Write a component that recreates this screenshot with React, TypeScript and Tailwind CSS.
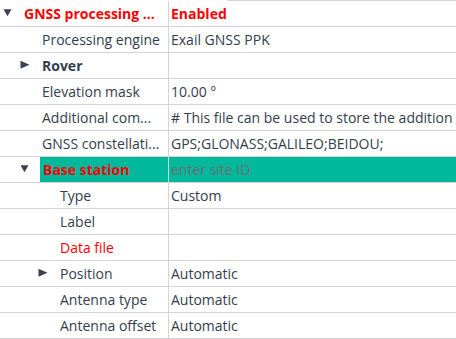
import React from "react";

type Row = {
  label: string;
  value?: string;
  level: number;
  arrow?: "down" | "right";
  labelClass?: string;
  valueClass?: string;
  selected?: boolean;
};

const rows: Row[] = [
  { label: "GNSS processing ...", value: "Enabled", level: 0, arrow: "down", labelClass: "text-[#ff0000] font-bold", valueClass: "text-[#ff0000] font-bold" },
  { label: "Processing engine", value: "Exail GNSS PPK", level: 1 },
  { label: "Rover", level: 1, arrow: "right", labelClass: "font-bold" },
  { label: "Elevation mask", value: "10.00 °", level: 1 },
  { label: "Additional com...", value: "# This file can be used to store the addition", level: 1 },
  { label: "GNSS constellati...", value: "GPS;GLONASS;GALILEO;BEIDOU;", level: 1 },
  { label: "Base station", value: "enter site ID", level: 1, arrow: "down", labelClass: "text-[#ff0000] font-bold", valueClass: "text-[#6a6e70]", selected: true },
  { label: "Type", value: "Custom", level: 2 },
  { label: "Label", value: "", level: 2 },
  { label: "Data file", value: "", level: 2, labelClass: "text-[#ff0000]" },
  { label: "Position", value: "Automatic", level: 2, arrow: "right" },
  { label: "Antenna type", value: "Automatic", level: 2 },
  { label: "Antenna offset", value: "Automatic", level: 2 },
];

function Arrow({ dir }: { dir: "down" | "right" }) {
  if (dir === "down") {
    return (
      <svg width="9" height="8" viewBox="0 0 9 8" className="block">
        <polygon points="0.5,0.5 8.5,0.5 4.5,7.5" fill="#3c4150" />
      </svg>
    );
  }
  return (
    <svg width="10" height="9" viewBox="0 0 10 9" className="block">
      <polygon points="0.5,0.5 9.5,4.5 0.5,8.5" fill="#3c4150" />
    </svg>
  );
}

const indentPad = ["pl-[24px]", "pl-[42px]", "pl-[60px]"];
const arrowPos = ["left-[3px]", "left-[20px]", "left-[38px]"];

export default function App() {
  return (
    <div
      className="w-[456px] h-[339px] overflow-hidden bg-white text-[14px] text-[#333e4c]"
      style={{ fontFamily: '"Open Sans", "Noto Sans", sans-serif' }}
    >
      <div className="flex h-[1px]">
        <div className="w-[228px]" />
        <div className="flex-1 bg-[#d4d4d4]" />
      </div>
      {rows.map((r, i) => (
        <div key={i} className="flex h-[26px] border-b border-[#d4d4d4] relative">
          <div className={`w-[168px] shrink-0 relative flex items-center ${r.selected ? "" : indentPad[r.level]}`}>
            {r.arrow && (
              <div className={`absolute ${arrowPos[r.level]} top-1/2 -translate-y-[65%]`}>
                <Arrow dir={r.arrow} />
              </div>
            )}
            {r.selected ? (
              <div className="ml-[40px] flex-1 h-full bg-[#00b89c] flex items-center pl-[3px]">
                <span className={`whitespace-nowrap ${r.labelClass ?? ""}`}>{r.label}</span>
              </div>
            ) : (
              <span className={`whitespace-nowrap overflow-hidden ${r.labelClass ?? ""}`}>{r.label}</span>
            )}
          </div>
          <div className={`flex-1 min-w-0 border-l border-[#d4d4d4] flex items-center pl-[2px] overflow-hidden ${r.selected ? "bg-[#00b89c]" : ""}`}>
            <span className={`whitespace-nowrap ${r.valueClass ?? ""}`}>{r.value}</span>
          </div>
        </div>
      ))}
    </div>
  );
}
